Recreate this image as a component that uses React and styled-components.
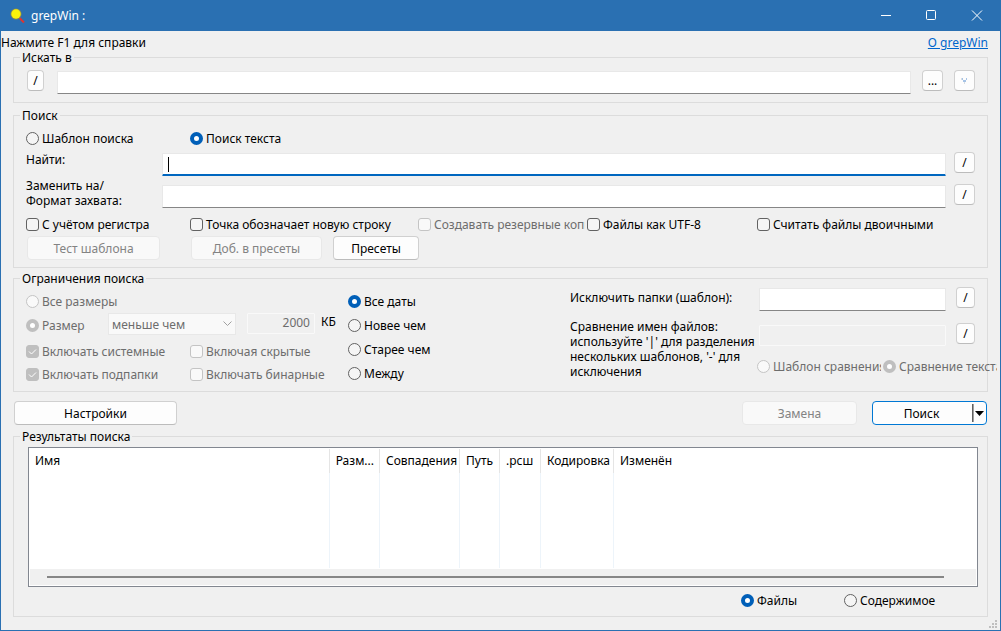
import React, { useState } from 'react';
import styled, { createGlobalStyle } from 'styled-components'

const GlobalStyle = createGlobalStyle`
    * {
        box-sizing: border-box;
    }

    body {
        margin: 0;
        background: #f0f0f0;
    }

    body, button, input, select {
        font-family: 'Noto Sans', 'Open Sans', sans-serif;
        font-size: 12px;
        line-height: 15px;
        color: #000;
    }
`

const Window = styled.div`
    display: flex;
    flex-direction: column;
    min-height: 100vh;
    border: 1px solid #2a70b2;
    border-top: 0;
    background: #f0f0f0;
    position: relative;
`

const TitleBar = styled.header`
    display: flex;
    align-items: center;
    height: 31px;
    padding-left: 8px;
    gap: 6px;
    background: #2a70b2;
    color: #fff;
`

const Title = styled.h1`
    flex: 1;
    margin: 0;
    font-size: 12px;
    font-weight: 400;
`

const WindowButtons = styled.div`
    display: flex;
`

const WindowButton = styled.button`
    display: flex;
    align-items: center;
    justify-content: center;
    width: 46px;
    height: 31px;
    padding: 0;
    border: 0;
    background: none;
`

const HelpRow = styled.div`
    display: flex;
    justify-content: space-between;
    height: 19px;
    padding: 4px 12px 0 0;
`

const AboutLink = styled.a`
    color: #0066cc;
    text-decoration: underline;
`

const Content = styled.main`
    flex: 1;
    display: flex;
    flex-direction: column;
    padding: 0 12px 13px;
`

const Group = styled.fieldset`
    display: flex;
    flex-direction: column;
    flex: ${(props) => (props.$grow ? 1 : 'none')};
    min-width: 0;
    margin: 0 0 ${(props) => props.$space || 0}px;
    padding: 0;
    border: 1px solid #dcdcdc;
`

const Legend = styled.legend`
    margin-left: 6px;
    padding: 0 2px;
`

const PathRow = styled.div`
    display: flex;
    align-items: flex-start;
    gap: 11px;
    padding: 5px 12px 8px 13px;
`

const PathField = styled.div`
    display: flex;
    flex: 1;
    padding: 1px 0 0 2px;
`

const TextField = styled.input`
    width: 100%;
    min-width: 0;
    height: 23px;
    padding: 2px 6px;
    border: 1px solid #e8e8e8;
    border-bottom: ${(props) => (props.$active ? '2px solid #0067c0' : '1px solid #868686')};
    border-radius: 1px;
    background: #fff;
    outline: none;

    &:disabled {
        height: 21px;
        border-color: #f9f9f9;
        background: #f0f0f0;
        color: #6d6d6d;
    }
`

const SmallButton = styled.button`
    display: flex;
    align-items: center;
    justify-content: center;
    flex: none;
    width: ${(props) => props.$width || 21}px;
    height: 21px;
    padding: 0;
    border: 1px solid #d0d0d0;
    border-bottom-color: #bcbcbc;
    border-radius: 4px;
    background: #fdfdfd;
`

const Button = styled.button`
    width: ${(props) => props.$width}px;
    height: 24px;
    padding: 0;
    border: 1px solid #d0d0d0;
    border-bottom-color: #bcbcbc;
    border-radius: 4px;
    background: #fdfdfd;

    &:disabled {
        border-color: #e8e8e8;
        background: #f9f9f9;
        color: #838383;
    }
`

const SearchBody = styled.div`
    padding: 8px 12px 7px;
`

const ModeRow = styled.div`
    display: grid;
    grid-template-columns: 164px auto;
    justify-content: start;
`

const FieldGrid = styled.div`
    display: grid;
    grid-template-columns: 128px 1fr 21px;
    column-gap: 8px;
    row-gap: 2px;
    align-items: end;
    padding: 6px 0 9px;

    ${SmallButton} {
        margin-bottom: 3px;
    }
`

const FieldLabel = styled.label`
    align-self: start;
    white-space: nowrap;
`

const CaretField = styled.div`
    display: flex;
    position: relative;
`

const Caret = styled.span`
    position: absolute;
    left: 6px;
    top: 4px;
    width: 1px;
    height: 15px;
    background: #000;
`

const FlagRow = styled.div`
    display: grid;
    grid-template-columns: 164px 228px 169px 170px 1fr;
`

const PresetRow = styled.div`
    display: grid;
    grid-template-columns: 164px 142px auto;
    justify-content: start;
    padding: 4px 0 0 1px;
`

const OptionLabel = styled.label`
    display: flex;
    align-items: center;
    gap: 3px;
    height: 15px;
    width: ${(props) => (props.$width ? props.$width + 'px' : 'auto')};
    overflow: ${(props) => (props.$width ? 'hidden' : 'visible')};
    white-space: nowrap;
    color: ${(props) => (props.$disabled ? '#6d6d6d' : '#000')};
`

const OptionInput = styled.input`
    appearance: none;
    flex: none;
    width: 13px;
    height: 13px;
    margin: 0;
    border: 1px solid #626262;
    border-radius: ${(props) => (props.type === 'radio' ? '50%' : '3px')};
    background: #f5f5f5;

    &:disabled {
        border-color: #c4c4c4;
        background: #f9f9f9;
    }

    &[type='radio']:checked {
        border: 4px solid #005fb8;
        background: #fff;
    }

    &[type='radio']:checked:disabled {
        border-color: #bfbfbf;
    }

    &[type='checkbox']:checked {
        border-color: #bfbfbf;
        background: #bfbfbf;
    }
`

const CheckWrap = styled.span`
    display: flex;
    position: relative;

    svg {
        position: absolute;
        left: 0;
        top: 0;
        pointer-events: none;
    }
`

const LimitsBody = styled.div`
    display: grid;
    grid-template-columns: 322px 222px 1fr;
    padding: 0 12px 9px;
`

const SizeColumn = styled.div`
    padding-top: 8px;
`

const SizeRow = styled.div`
    display: flex;
    align-items: center;
    height: 25px;
    margin: 4px 0 6px;

    ${OptionLabel} {
        width: 82px;
    }
`

const SelectWrap = styled.div`
    position: relative;
    align-self: flex-start;
    width: 128px;
    margin-right: 11px;

    svg {
        position: absolute;
        right: 4px;
        top: 8px;
        pointer-events: none;
    }
`

const Select = styled.select`
    appearance: none;
    display: block;
    width: 100%;
    height: 22px;
    padding: 0 3px;
    border: 1px solid #e8e8e8;
    background: #f9f9f9;

    &:disabled {
        opacity: 1;
        color: #6d6d6d;
    }
`

const SizeField = styled.div`
    display: flex;
    align-self: flex-start;
    width: 68px;
    margin-right: 6px;

    input {
        padding: 0 4px 2px;
        text-align: right;
    }
`

const SizeUnit = styled.label`
    align-self: flex-start;
    padding-top: 1px;
`

const IncludeGrid = styled.div`
    display: grid;
    grid-template-columns: 164px auto;
    row-gap: 8px;
    justify-content: start;
`

const DateColumn = styled.div`
    display: flex;
    flex-direction: column;
    align-items: flex-start;
    gap: 9px;
    padding-top: 8px;
`

const PatternGrid = styled.div`
    display: grid;
    grid-template-columns: 189px 1fr 19px;
    grid-template-rows: 24px 27px auto;
    row-gap: 8px;
    align-items: end;
    padding-top: 1px;

    ${FieldLabel}:first-child {
        padding-top: 3px;
    }
`

const PatternField = styled.div`
    display: flex;
    padding-right: 10px;
`

const PatternHint = styled(FieldLabel)`
    grid-row: 2 / 4;
    white-space: pre-line;
`

const PatternButton = styled.div`
    align-self: start;
    padding-top: ${(props) => (props.$low ? 4 : 0)}px;
`

const PatternModes = styled.div`
    grid-column: 2 / 4;
    align-self: start;
    display: flex;
    gap: 2px;
    margin: 0 -22px 0 -2px;
    padding-top: 5px;
`

const ActionRow = styled.div`
    display: flex;
    justify-content: space-between;
    padding: 9px 1px 4px;
`

const ActionGroup = styled.div`
    display: flex;
    gap: 15px;
`

const SplitButton = styled.div`
    display: flex;
    align-items: center;
    width: 115px;
    height: 24px;
    border: 1px solid #0078d4;
    border-radius: 4px;
    background: #fdfdfd;
`

const SplitMain = styled.button`
    flex: 1;
    height: 18px;
    padding: 0 2px 0 0;
    border: 0;
    border-right: 1px solid #606060;
    background: none;
`

const SplitArrow = styled.button`
    display: flex;
    align-items: center;
    justify-content: center;
    width: 13px;
    height: 18px;
    padding: 0 1px 0 0;
    border: 0;
    border-left: 1px solid #a0a0a0;
    background: none;
`

const ResultsBody = styled.div`
    flex: 1;
    display: flex;
    flex-direction: column;
    padding: 3px 9px 8px 14px;
`

const ListView = styled.div`
    flex: 1;
    display: flex;
    flex-direction: column;
    border: 1px solid #828790;
    background: #fff;
`

const TableWrap = styled.div`
    flex: 1;
    display: grid;
    padding-top: 1px;
`

const Table = styled.table`
    width: 100%;
    height: 100%;
    min-height: 119px;
    table-layout: fixed;
    border-collapse: separate;
    border-spacing: 0;
`

const Th = styled.th`
    width: ${(props) => (props.$width ? props.$width + 'px' : 'auto')};
    height: 24px;
    padding: 0 5px 2px ${(props) => (props.$align === 'right' ? 0 : 6)}px;
    border-right: ${(props) => (props.$width ? '1px solid #e5e5e5' : '0')};
    font-weight: 400;
    text-align: ${(props) => props.$align || 'left'};
    white-space: nowrap;
`

const Td = styled.td`
    padding: 0;
    border-right: ${(props) => (props.$line ? '1px solid #edf4fa' : '0')};
`

const ScrollTrack = styled.div`
    display: flex;
    align-items: center;
    height: 16px;
    margin: 1px;
    padding: 0 32px 0 17px;
    background: #f0f0f0;
`

const ScrollThumb = styled.div`
    flex: 1;
    height: 2px;
    background: #868686;
`

const ViewRow = styled.div`
    display: grid;
    grid-template-columns: 103px 96px;
    justify-content: end;
    padding: 6px 38px 0 0;
`

const Grip = styled.svg`
    position: absolute;
    right: 3px;
    bottom: 2px;
`

const columns = [
    { title: 'Имя', width: 301 },
    { title: 'Разм...', width: 50, align: 'right' },
    { title: 'Совпадения', width: 80 },
    { title: 'Путь', width: 40 },
    { title: '.рсш', width: 41 },
    { title: 'Кодировка', width: 73 },
    { title: 'Изменён' },
]

const Radio = ({ name, value, current, onPick, disabled, width, children }) => (
    <OptionLabel $disabled={disabled} $width={width}>
        <OptionInput
            type="radio"
            name={name}
            value={value}
            checked={current === value}
            disabled={disabled}
            onChange={() => { onPick(value) }}
        />
        <span>{children}</span>
    </OptionLabel>
)

const Check = ({ defaultChecked, disabled, width, children }) => {
    const [checked, setChecked] = useState(!!defaultChecked);

    return (
        <OptionLabel $disabled={disabled} $width={width}>
            <CheckWrap>
                <OptionInput
                    type="checkbox"
                    checked={checked}
                    disabled={disabled}
                    onChange={(e) => { setChecked(e.target.checked) }}
                />
                {checked && (
                    <svg width="13" height="13" viewBox="0 0 13 13" fill="none" stroke="#fff">
                        <path d="M3 6.5 L5.5 9 L10 4.5" />
                    </svg>
                )}
            </CheckWrap>
            <span>{children}</span>
        </OptionLabel>
    )
}

const App = () => {
    const [path, setPath] = useState('');
    const [find, setFind] = useState('');
    const [replace, setReplace] = useState('');
    const [exclude, setExclude] = useState('');
    const [mode, setMode] = useState('text');
    const [size, setSize] = useState('some');
    const [date, setDate] = useState('all');
    const [match, setMatch] = useState('text');
    const [view, setView] = useState('files');

    return (
        <Window>
            <GlobalStyle />
            <TitleBar>
                <svg width="16" height="16" viewBox="0 0 16 16">
                    <path d="M10.5 10 L15 14.5" stroke="#e0352f" strokeWidth="2" />
                    <circle cx="7" cy="6" r="5.5" fill="#8a8a55" />
                    <circle cx="7" cy="6" r="4.7" fill="#fbf30a" />
                </svg>
                <Title>grepWin :</Title>
                <WindowButtons>
                    <WindowButton aria-label="Свернуть">
                        <svg width="12" height="11" stroke="#fff"><path d="M2 5.5 H12" /></svg>
                    </WindowButton>
                    <WindowButton aria-label="Развернуть">
                        <svg width="12" height="11" fill="none" stroke="#fff"><rect x="1.5" y="0.5" width="9" height="9" rx="1" /></svg>
                    </WindowButton>
                    <WindowButton aria-label="Закрыть">
                        <svg width="12" height="11" stroke="#fff"><path d="M1 0.5 L11 10.5 M11 0.5 L1 10.5" /></svg>
                    </WindowButton>
                </WindowButtons>
            </TitleBar>

            <HelpRow>
                <span>Нажмите F1 для справки</span>
                <AboutLink href="#about">О grepWin</AboutLink>
            </HelpRow>

            <Content>
                <Group $space={5}>
                    <Legend>Искать в</Legend>
                    <PathRow>
                        <SmallButton $width={17}>/</SmallButton>
                        <PathField>
                            <TextField aria-label="Искать в" value={path} onChange={(e) => { setPath(e.target.value) }} />
                        </PathField>
                        <SmallButton>...</SmallButton>
                        <SmallButton aria-label="История">
                            <svg width="7" height="7" viewBox="0 0 7 7">
                                <path d="M1 1h1v2h-1z M5 1h1v2h-1z M2 3h3v2h-3z" fill="#a5c3e6" />
                                <path d="M0 1h1v2h-1z M3 5h1v2h-1z" fill="#d8dde2" />
                            </svg>
                        </SmallButton>
                    </PathRow>
                </Group>

                <Group $space={3}>
                    <Legend>Поиск</Legend>
                    <SearchBody>
                        <ModeRow>
                            <Radio name="mode" value="regex" current={mode} onPick={setMode}>Шаблон поиска</Radio>
                            <Radio name="mode" value="text" current={mode} onPick={setMode}>Поиск текста</Radio>
                        </ModeRow>
                        <FieldGrid>
                            <FieldLabel htmlFor="find">Найти:</FieldLabel>
                            <CaretField>
                                <TextField id="find" $active value={find} onChange={(e) => { setFind(e.target.value) }} />
                                {!find && <Caret />}
                            </CaretField>
                            <SmallButton>/</SmallButton>
                            <FieldLabel htmlFor="replace">Заменить на/<br />Формат захвата:</FieldLabel>
                            <TextField id="replace" value={replace} onChange={(e) => { setReplace(e.target.value) }} />
                            <SmallButton>/</SmallButton>
                        </FieldGrid>
                        <FlagRow>
                            <Check>С учётом регистра</Check>
                            <Check>Точка обозначает новую строку</Check>
                            <Check disabled width={167}>Создавать резервные копии</Check>
                            <Check>Файлы как UTF-8</Check>
                            <Check>Считать файлы двоичными</Check>
                        </FlagRow>
                        <PresetRow>
                            <Button $width={133} disabled>Тест шаблона</Button>
                            <Button $width={131} disabled>Доб. в пресеты</Button>
                            <Button $width={86}>Пресеты</Button>
                        </PresetRow>
                    </SearchBody>
                </Group>

                <Group>
                    <Legend>Ограничения поиска</Legend>
                    <LimitsBody>
                        <SizeColumn>
                            <Radio name="size" value="all" current={size} onPick={setSize} disabled>Все размеры</Radio>
                            <SizeRow>
                                <Radio name="size" value="some" current={size} onPick={setSize} disabled>Размер</Radio>
                                <SelectWrap>
                                    <Select aria-label="Сравнение размера" disabled>
                                        <option>меньше чем</option>
                                    </Select>
                                    <svg width="9" height="6" viewBox="0 0 9 6" fill="none" stroke="#a0a0a0">
                                        <path d="M0.5 0.5 L4.5 4.5 L8.5 0.5" />
                                    </svg>
                                </SelectWrap>
                                <SizeField>
                                    <TextField id="kb" defaultValue="2000" disabled />
                                </SizeField>
                                <SizeUnit htmlFor="kb">КБ</SizeUnit>
                            </SizeRow>
                            <IncludeGrid>
                                <Check disabled defaultChecked>Включать системные</Check>
                                <Check disabled>Включая скрытые</Check>
                                <Check disabled defaultChecked>Включать подпапки</Check>
                                <Check disabled>Включать бинарные</Check>
                            </IncludeGrid>
                        </SizeColumn>
                        <DateColumn>
                            <Radio name="date" value="all" current={date} onPick={setDate}>Все даты</Radio>
                            <Radio name="date" value="newer" current={date} onPick={setDate}>Новее чем</Radio>
                            <Radio name="date" value="older" current={date} onPick={setDate}>Старее чем</Radio>
                            <Radio name="date" value="between" current={date} onPick={setDate}>Между</Radio>
                        </DateColumn>
                        <PatternGrid>
                            <FieldLabel htmlFor="exclude">Исключить папки (шаблон):</FieldLabel>
                            <PatternField>
                                <TextField id="exclude" value={exclude} onChange={(e) => { setExclude(e.target.value) }} />
                            </PatternField>
                            <PatternButton>
                                <SmallButton $width={19}>/</SmallButton>
                            </PatternButton>
                            <PatternHint htmlFor="names">
                                {"Сравнение имен файлов:\nиспользуйте '|' для разделения\nнескольких шаблонов, '-' для\nисключения"}
                            </PatternHint>
                            <PatternField>
                                <TextField id="names" disabled />
                            </PatternField>
                            <PatternButton $low>
                                <SmallButton $width={19}>/</SmallButton>
                            </PatternButton>
                            <PatternModes>
                                <Radio name="match" value="regex" current={match} onPick={setMatch} disabled width={124}>Шаблон сравнения</Radio>
                                <Radio name="match" value="text" current={match} onPick={setMatch} disabled width={114}>Сравнение текста</Radio>
                            </PatternModes>
                        </PatternGrid>
                    </LimitsBody>
                </Group>

                <ActionRow>
                    <Button $width={163}>Настройки</Button>
                    <ActionGroup>
                        <Button $width={115} disabled>Замена</Button>
                        <SplitButton>
                            <SplitMain>Поиск</SplitMain>
                            <SplitArrow aria-label="Варианты поиска">
                                <svg width="9" height="5" viewBox="0 0 9 5"><path d="M0 0 H9 L4.5 5 Z" /></svg>
                            </SplitArrow>
                        </SplitButton>
                    </ActionGroup>
                </ActionRow>

                <Group $grow>
                    <Legend>Результаты поиска</Legend>
                    <ResultsBody>
                        <ListView>
                            <TableWrap>
                                <Table>
                                    <thead>
                                        <tr>
                                            {columns.map((col) => (
                                                <Th key={col.title} $width={col.width} $align={col.align}>{col.title}</Th>
                                            ))}
                                        </tr>
                                    </thead>
                                    <tbody>
                                        <tr>
                                            {columns.map((col) => (
                                                <Td key={col.title} $line={!!col.width} />
                                            ))}
                                        </tr>
                                    </tbody>
                                </Table>
                            </TableWrap>
                            <ScrollTrack>
                                <ScrollThumb />
                            </ScrollTrack>
                        </ListView>
                        <ViewRow>
                            <Radio name="view" value="files" current={view} onPick={setView}>Файлы</Radio>
                            <Radio name="view" value="content" current={view} onPick={setView}>Содержимое</Radio>
                        </ViewRow>
                    </ResultsBody>
                </Group>
            </Content>

            <Grip width="8" height="8" fill="#bfbfbf">
                <path d="M6 0h2v2h-2z M3 3h2v2h-2z M6 3h2v2h-2z M0 6h2v2h-2z M3 6h2v2h-2z M6 6h2v2h-2z" />
            </Grip>
        </Window>
    )
}

export default App
